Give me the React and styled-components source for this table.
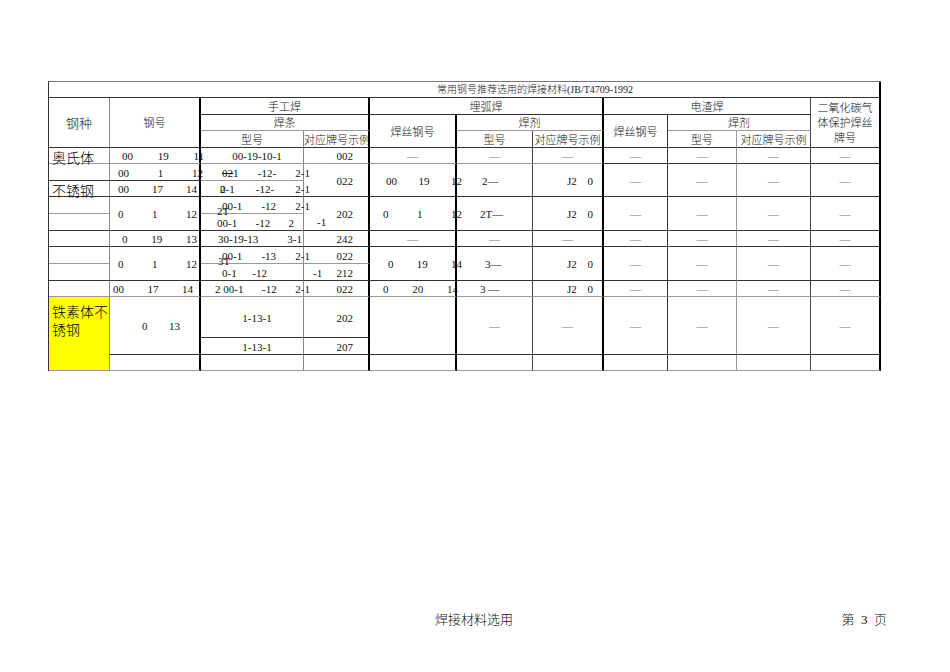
import React from 'react';
import styled, { createGlobalStyle } from 'styled-components';

const GlobalStyle = createGlobalStyle`
  html, body {
    margin: 0;
    padding: 0;
    background: #fff;
  }
  body {
    font-family: "Liberation Serif", "Noto Sans CJK SC", serif;
    font-weight: 300;
    color: #111;
  }
`;

// right edge of each column: thick black rules between the welding groups
const EDGES = {
    1: '1px solid #8a8a8a',
    2: '2px solid #000',
    3: '1px solid #8a8a8a',
    4: '2px solid #000',
    5: '2px solid #000',
    6: '1px solid #444',
    7: '2px solid #000',
    8: '1px solid #333',
    9: '1px solid #999',
    10: '1px solid #444',
    11: '2px solid #000',
};

const Row = {
    A: 5, B: 6, C: 7, D: 8, E: 9, F: 10, G: 11, H: 12, I: 13, J: 14, J2: 15, K: 16,
};

const App = () => {
    const dashes = (r, rs = 1, from = 8) =>
        [8, 9, 10, 11].filter(c => c >= from).map(c => (
            <Cell key={`${r}-${c}`} $c={c} $r={r} $rs={rs}><Dash>—</Dash></Cell>
        ));

    const flux = (r, rs, lead) => (
        <>
            <Cell $c={6} $r={r} $rs={rs} $align="flex-start" $pl={lead.pad}>{lead.text}</Cell>
            <Cell $c={7} $r={r} $rs={rs}>
                <Nums $l={34} $r={9}><span>J2</span><span>0</span></Nums>
            </Cell>
        </>
    );

    return (
        <Page>
            <GlobalStyle />
            <Sheet>
                {/* title */}
                <Cell $c={1} $cs={11} $r={1} $v="flex-end" $align="flex-start" $pl={388}>
                    <Title>常用钢号推荐选用的焊接材料(JB/T4709-1992</Title>
                </Cell>

                {/* header */}
                <Cell $c={1} $r={2} $rs={3}><Big>钢种</Big></Cell>
                <Cell $c={2} $r={2} $rs={3}>钢号</Cell>
                <Cell $c={3} $cs={2} $r={2}>手工焊</Cell>
                <Cell $c={3} $cs={2} $r={3} $soft>焊条</Cell>
                <Cell $c={3} $r={4}>型号</Cell>
                <Cell $c={4} $r={4} $align="flex-start">对应牌号示例</Cell>
                <Cell $c={5} $cs={3} $r={2}>埋弧焊</Cell>
                <Cell $c={5} $r={3} $rs={2}>焊丝钢号</Cell>
                <Cell $c={6} $cs={2} $r={3} $soft>焊剂</Cell>
                <Cell $c={6} $r={4}>型号</Cell>
                <Cell $c={7} $r={4}>对应牌号示例</Cell>
                <Cell $c={8} $cs={3} $r={2}>电渣焊</Cell>
                <Cell $c={8} $r={3} $rs={2}>焊丝钢号</Cell>
                <Cell $c={9} $cs={2} $r={3} $soft>焊剂</Cell>
                <Cell $c={9} $r={4}>型号</Cell>
                <Cell $c={10} $r={4}>对应牌号示例</Cell>
                <Cell $c={11} $r={2} $rs={3}>
                    <Stacked>二氧化碳气<br />体保护焊丝<br />牌号</Stacked>
                </Cell>

                {/* 奥氏体 */}
                <Cell $c={1} $r={Row.A} $align="flex-start" $pl={3} $soft><Kind>奥氏体</Kind></Cell>
                <Cell $c={2} $r={Row.A} $soft>
                    <Nums $l={12} $r={-5}><span>00</span><span>19</span><span>11</span></Nums>
                </Cell>
                <Cell $c={3} $r={Row.A} $pl={10} $soft>00-19-10-1</Cell>
                <Cell $c={4} $r={Row.A} $align="flex-end" $pr={15} $soft>002</Cell>
                <Cell $c={5} $r={Row.A} $soft><Dash>—</Dash></Cell>
                <Cell $c={6} $r={Row.A} $soft><Dash>—</Dash></Cell>
                <Cell $c={7} $r={Row.A} $soft><Dash>—</Dash></Cell>
                {dashes(Row.A)}

                {/* rows B / C */}
                <Cell $c={1} $r={Row.B} />
                <Cell $c={1} $r={Row.C} $align="flex-start" $pl={3}><Kind>不锈钢</Kind></Cell>
                <Cell $c={2} $r={Row.B}>
                    <Nums $l={8} $r={-4}><span>00</span><span>1</span><span>12</span></Nums>
                </Cell>
                <Cell $c={2} $r={Row.C}>
                    <Nums $l={8} $r={2}><span>00</span><span>17</span><span>14</span></Nums>
                </Cell>
                <Cell $c={3} $r={Row.B} $soft>
                    <Nums $l={21} $r={-7}><span><Struck>02</Struck>1</span><span>-12-</span><span>2-1</span></Nums>
                </Cell>
                <Cell $c={3} $r={Row.C}>
                    <Nums $l={19} $r={-7}><span>2<Overlap>0</Overlap>-1</span><span>-12-</span><span>2-1</span></Nums>
                </Cell>
                <Cell $c={4} $r={Row.B} $rs={2} $align="flex-end" $pr={15}>022</Cell>
                <Cell $c={5} $r={Row.B} $rs={2}>
                    <Nums $l={16} $r={-7}><span>00</span><span>19</span><span>12</span></Nums>
                </Cell>
                {flux(Row.B, 2, { pad: 25, text: '2—' })}
                {dashes(Row.B, 2)}

                {/* rows D / E */}
                <Cell $c={1} $r={Row.D} $soft />
                <Cell $c={1} $r={Row.E} />
                <Cell $c={2} $r={Row.D} $rs={2}>
                    <Nums $l={8} $r={2}><span>0</span><span>1</span><span>12</span></Nums>
                </Cell>
                <Cell $c={3} $r={Row.D} $soft>
                    <Nums $l={21} $r={-7}><span>00-1</span><span>-12</span><span>2-1</span></Nums>
                </Cell>
                <Cell $c={3} $r={Row.E}>
                    <Ghost $x={16} $y={-9}>2T</Ghost>
                    <Nums $l={16} $r={9}><span>00-1</span><span>-12</span><span>2</span></Nums>
                </Cell>
                <Cell $c={4} $r={Row.D} $rs={2}>
                    <Nums $l={13} $r={15}><Low>-1</Low><span>202</span></Nums>
                </Cell>
                <Cell $c={5} $r={Row.D} $rs={2}>
                    <Nums $l={13} $r={-7}><span>0</span><span>1</span><span>12</span></Nums>
                </Cell>
                {flux(Row.D, 2, { pad: 23, text: '2T—' })}
                {dashes(Row.D, 2)}

                {/* row F */}
                <Cell $c={1} $r={Row.F} />
                <Cell $c={2} $r={Row.F}>
                    <Nums $l={12} $r={2}><span>0</span><span>19</span><span>13</span></Nums>
                </Cell>
                <Cell $c={3} $r={Row.F}>
                    <Nums $l={17} $r={1}><span>30-19-13</span><span>3-1</span></Nums>
                </Cell>
                <Cell $c={4} $r={Row.F} $align="flex-end" $pr={15}>242</Cell>
                <Cell $c={5} $r={Row.F}><Dash>—</Dash></Cell>
                <Cell $c={6} $r={Row.F}><Dash>—</Dash></Cell>
                <Cell $c={7} $r={Row.F}><Dash>—</Dash></Cell>
                {dashes(Row.F)}

                {/* rows G / H */}
                <Cell $c={1} $r={Row.G} $soft />
                <Cell $c={1} $r={Row.H} />
                <Cell $c={2} $r={Row.G} $rs={2}>
                    <Nums $l={8} $r={2}><span>0</span><span>1</span><span>12</span></Nums>
                </Cell>
                <Cell $c={3} $r={Row.G} $soft>
                    <Nums $l={21} $r={-7}><span>00-1</span><span>-13</span><span>2-1</span></Nums>
                </Cell>
                <Cell $c={3} $r={Row.H}>
                    <Ghost $x={17} $y={-9}>3T</Ghost>
                    <Nums $l={21} $r={36}><span>0-1</span><span>-12</span></Nums>
                </Cell>
                <Cell $c={4} $r={Row.G} $soft $align="flex-end" $pr={15}>022</Cell>
                <Cell $c={4} $r={Row.H}>
                    <Nums $l={9} $r={15}><span>-1</span><span>212</span></Nums>
                </Cell>
                <Cell $c={5} $r={Row.G} $rs={2}>
                    <Nums $l={18} $r={-7}><span>0</span><span>19</span><span>14</span></Nums>
                </Cell>
                {flux(Row.G, 2, { pad: 28, text: '3—' })}
                {dashes(Row.G, 2)}

                {/* row I */}
                <Cell $c={1} $r={Row.I} $soft />
                <Cell $c={2} $r={Row.I} $soft>
                    <Nums $l={3} $r={6}><span>00</span><span>17</span><span>14</span></Nums>
                </Cell>
                <Cell $c={3} $r={Row.I} $soft>
                    <Nums $l={14} $r={-7}><span>2 00-1</span><span>-12</span><span>2-1</span></Nums>
                </Cell>
                <Cell $c={4} $r={Row.I} $soft $align="flex-end" $pr={15}>022</Cell>
                <Cell $c={5} $r={Row.I} $soft>
                    <Nums $l={13} $r={-3}><span>0</span><span>20</span><span>14</span></Nums>
                </Cell>
                <Cell $c={6} $r={Row.I} $soft $align="flex-start" $pl={23}>3 —</Cell>
                <Cell $c={7} $r={Row.I} $soft>
                    <Nums $l={34} $r={9}><span>J2</span><span>0</span></Nums>
                </Cell>
                {[8, 9, 10, 11].map(c => (
                    <Cell key={`i-${c}`} $c={c} $r={Row.I} $soft><Dash>—</Dash></Cell>
                ))}

                {/* 铁素体不锈钢 */}
                <Cell $c={1} $r={Row.J} $rs={3} $v="flex-start" $align="flex-start" $pl={3} $bg="#ffff00" $soft>
                    <Kind $wrap>铁素体不<br />锈钢</Kind>
                </Cell>
                <Cell $c={2} $r={Row.J} $rs={2}>
                    <Nums $l={32} $r={19}><span>0</span><span>13</span></Nums>
                </Cell>
                <Cell $c={3} $r={Row.J} $pl={10}>1-13-1</Cell>
                <Cell $c={3} $r={Row.J2} $pl={10}>1-13-1</Cell>
                <Cell $c={4} $r={Row.J} $align="flex-end" $pr={15}>202</Cell>
                <Cell $c={4} $r={Row.J2} $align="flex-end" $pr={15}>207</Cell>
                <Cell $c={5} $r={Row.J} $rs={2} />
                {[6, 7, 8, 9, 10, 11].map(c => (
                    <Cell key={`j-${c}`} $c={c} $r={Row.J} $rs={2}><Dash>—</Dash></Cell>
                ))}

                {/* blank last row */}
                {[2, 3, 4, 5, 6, 7, 8, 9, 10, 11].map(c => (
                    <Cell key={`k-${c}`} $c={c} $r={Row.K} $soft />
                ))}
            </Sheet>

            <Footer>
                <span>焊接材料选用</span>
                <PageNo>第  3  页</PageNo>
            </Footer>
        </Page>
    );
};

export default App;

const Page = styled.div`
    width: 950px;
    min-height: 672px;
    box-sizing: border-box;
    padding: 81px 0 0 48px;
    display: flex;
    flex-direction: column;
`;

const Sheet = styled.div`
    display: grid;
    grid-template-columns: 61px 91px 103px 66px 87px 76px 71px 64px 69px 74px 70px;
    grid-template-rows: 16px 17px 16px 17px 16px 17px 16px 17px 17px 16px 17px 17px 16px 41px 17px 16px;
    width: max-content;
    border-top: 1px solid #777;
    border-left: 1px solid #333;
`;

const Cell = styled.div`
    grid-column: ${p => p.$c} / span ${p => p.$cs || 1};
    grid-row: ${p => p.$r} / span ${p => p.$rs || 1};
    position: relative;
    display: flex;
    align-items: ${p => p.$v || 'center'};
    justify-content: ${p => p.$align || 'center'};
    box-sizing: border-box;
    min-width: 0;
    padding: 2px ${p => p.$pr || 0}px 0 ${p => p.$pl || 0}px;
    border-right: ${p => EDGES[p.$c + (p.$cs || 1) - 1]};
    border-bottom: 1px solid ${p => (p.$soft ? '#9a9a9a' : '#333')};
    background: ${p => p.$bg || 'transparent'};
    font-size: 11px;
    line-height: 13px;
    white-space: nowrap;
`;

const Title = styled.span`
    font-size: 10px;
    line-height: 12px;
    color: #222;
    padding-bottom: 1px;
`;

const Big = styled.span`
    font-size: 13px;
`;

const Kind = styled.span`
    font-family: "Noto Sans CJK SC", sans-serif;
    font-size: 14px;
    font-weight: 300;
    line-height: ${p => (p.$wrap ? '18px' : '14px')};
    color: #000;
    padding-top: ${p => (p.$wrap ? '3px' : '0')};
`;

const Stacked = styled.div`
    text-align: center;
    line-height: 15px;
`;

const Nums = styled.div`
    flex: 1;
    display: flex;
    justify-content: space-between;
    align-items: center;
    align-self: stretch;
    margin: 0 ${p => p.$r ?? 0}px 0 ${p => p.$l ?? 0}px;
`;

const Low = styled.span`
    align-self: flex-end;
    padding-bottom: 1px;
`;

const Dash = styled.span`
    color: #777;
`;

const Struck = styled.span`
    text-decoration: line-through;
`;

const Overlap = styled.span`
    margin-left: -0.5em;
`;

// stray glyphs that straddle a rule line in the original sheet
const Ghost = styled.span`
    position: absolute;
    left: ${p => p.$x}px;
    top: ${p => p.$y}px;
    font-size: 11px;
    line-height: 13px;
`;

const Footer = styled.div`
    display: flex;
    align-items: center;
    margin-top: 241px;
    padding: 0 63px 0 387px;
    font-size: 13px;
    line-height: 16px;
    color: #111;
`;

const PageNo = styled.span`
    margin-left: auto;
    white-space: pre;
`;
